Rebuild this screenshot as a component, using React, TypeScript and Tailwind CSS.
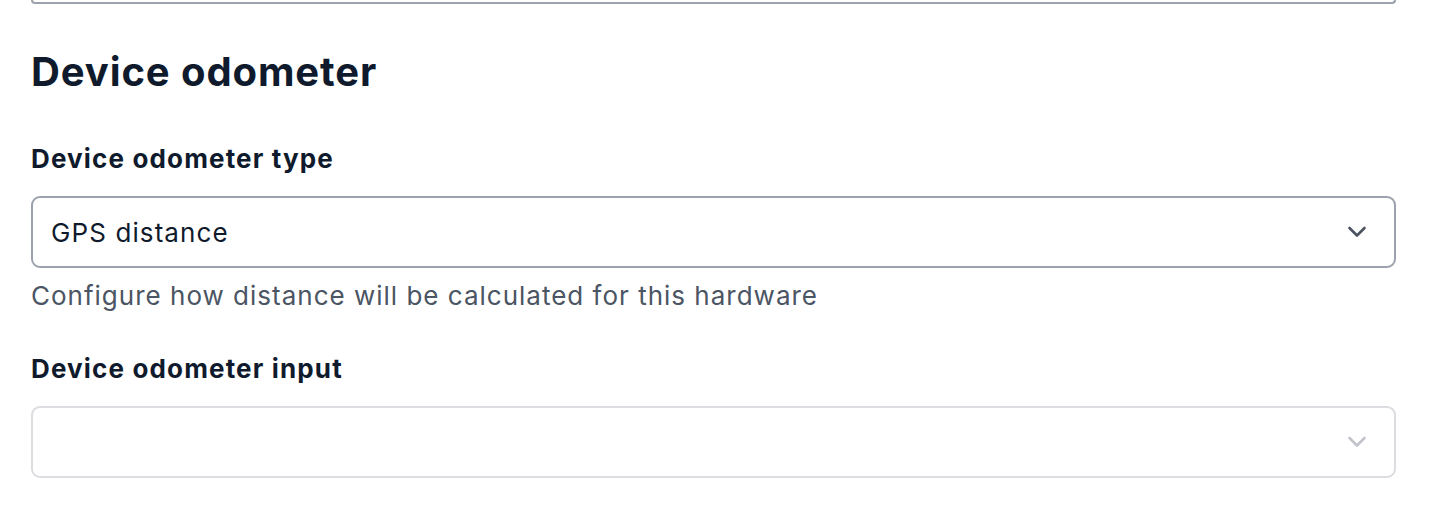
import React from "react";

function Chevron({ color }: { color: string }) {
  return (
    <svg width="20" height="12" viewBox="0 0 20 12" fill="none" className="shrink-0">
      <polyline points="2.5,2 10,9.5 17.5,2" stroke={color} strokeWidth="2.6" strokeLinecap="round" strokeLinejoin="round" />
    </svg>
  );
}

export default function App() {
  return (
    <div className="w-[1430px] h-[526px] bg-white overflow-hidden" style={{ fontFamily: "Inter, 'Noto Sans', sans-serif" }}>
      <div className="px-[31px] w-[1427px]">
        <div className="h-[4px] border-x-2 border-b-2 border-[#9ca3af] rounded-b-[8px]" />
        <h2 className="mt-[44px] text-[40px] leading-[48px] font-bold text-[#0f1b2d] tracking-[0.9px]">Device odometer</h2>
        <div className="mt-[47px] text-[26px] leading-[32px] font-bold text-[#0f1b2d] tracking-[1.15px]">Device odometer type</div>
        <div className="mt-[21px] h-[72px] rounded-[9px] border-2 border-[#9ba1ad] flex items-center justify-between pl-[18px] pr-[27px]">
          <span className="text-[26px] text-[#0f1b2d] tracking-[1.1px]">GPS distance</span>
          <Chevron color="#4b5260" />
        </div>
        <div className="mt-[12px] text-[26px] leading-[32px] text-[#4b5563] tracking-[1px]">Configure how distance will be calculated for this hardware</div>
        <div className="mt-[41px] text-[26px] leading-[32px] font-bold text-[#0f1b2d] tracking-[1.15px]">Device odometer input</div>
        <div className="mt-[21px] h-[72px] rounded-[9px] border-2 border-[#dcdce1] flex items-center justify-end pr-[27px]">
          <Chevron color="#c3c4ca" />
        </div>
      </div>
    </div>
  );
}
